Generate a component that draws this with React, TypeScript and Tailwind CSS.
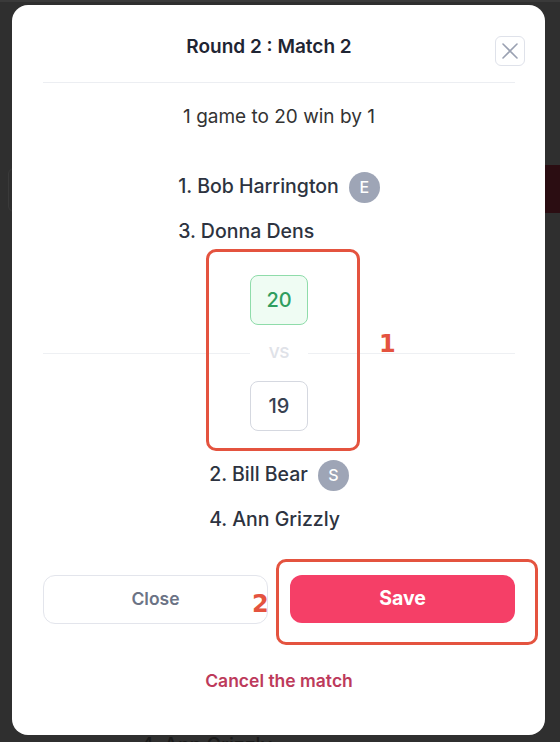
const TEAM_ONE = [
  { name: "1. Bob Harrington", badge: "E" },
  { name: "3. Donna Dens", badge: "" },
];

const TEAM_TWO = [
  { name: "2. Bill Bear", badge: "S" },
  { name: "4. Ann Grizzly", badge: "" },
];

type Player = { name: string; badge: string };

function TeamList({ players }: { players: Player[] }) {
  return (
    <div className="flex flex-col items-start gap-[15px]">
      {players.map((p) => (
        <div key={p.name} className="flex h-[30px] items-center gap-[10px]">
          <span className="text-[19.5px] font-medium text-[#2d3340]">{p.name}</span>
          {p.badge && (
            <span className="flex h-[31px] w-[31px] items-center justify-center rounded-full bg-[#9ea5b6] text-[16px] font-medium text-white">
              {p.badge}
            </span>
          )}
        </div>
      ))}
    </div>
  );
}

export default function App() {
  return (
    <div
      className="relative h-[742px] w-[560px] overflow-hidden bg-[#2f2f2f]"
      style={{ fontFamily: "Inter, 'Noto Sans', sans-serif" }}
    >
      {/* page behind the overlay */}
      <div className="absolute left-0 top-0 h-[2px] w-full bg-[#3a3a3a]" />
      <div className="absolute right-0 top-[165px] h-[48px] w-[16px] bg-[#2b0d12]" />
      <div className="absolute left-[8px] top-[168px] h-[44px] w-[8px] rounded-l-md border border-[#3a3a3a]" />
      <div className="absolute left-[141px] top-[731px] text-[19.5px] font-medium text-[#1a1a1a]">
        4. Ann Grizzly
      </div>

      <div className="relative ml-[12px] mt-[5px] flex h-[730px] w-[533px] flex-col rounded-2xl bg-white pl-[31px] pr-[30px] pt-[31px]">
        <div className="flex h-[30px] items-center">
          <h2 className="flex-1 pb-[7px] text-center text-[19px] font-semibold text-[#1f2533]">
            Round 2 : Match 2
          </h2>
          <button className="-mr-[10px] flex h-[30px] w-[30px] items-center justify-center rounded-md border border-[#dfe2ea] text-[#9aa1b2]">
            <svg width="20" height="20" viewBox="0 0 20 20" fill="none" stroke="currentColor" strokeWidth="1.6" strokeLinecap="round">
              <path d="M3 3L17 17M17 3L3 17" />
            </svg>
          </button>
        </div>

        <div className="mt-[16px] border-t border-[#eceef2]" />

        <p className="mt-[22px] text-center text-[19px] leading-[24px] text-[#333]">
          1 game to 20 win by 1
        </p>

        <div className="mt-[43px] flex justify-center">
          <TeamList players={TEAM_ONE} />
        </div>

        <div className="mt-[28px] flex flex-col items-stretch">
          <div className="flex justify-center">
            <div className="flex h-[50px] w-[58px] items-center justify-center rounded-lg border border-[#8fdcaa] bg-[#effcf3] text-[20px] font-medium text-[#2f9e5f]">
              20
            </div>
          </div>
          <div className="my-[20px] flex h-[16px] items-center">
            <div className="h-px flex-1 bg-[#eef0f3]" />
            <span className="w-[58px] text-center text-[15px] font-semibold text-[#dfe2e8]">VS</span>
            <div className="h-px flex-1 bg-[#eef0f3]" />
          </div>
          <div className="flex justify-center">
            <div className="flex h-[50px] w-[58px] items-center justify-center rounded-lg border border-[#d5d8e0] bg-white text-[20px] font-medium text-[#374151]">
              19
            </div>
          </div>
        </div>

        <div className="mt-[29px] flex justify-center">
          <TeamList players={TEAM_TWO} />
        </div>

        <div className="mt-[40px] grid grid-cols-2 gap-[22px]">
          <button className="h-[49px] rounded-xl border border-[#e3e5ec] bg-white text-[17.5px] font-semibold text-[#6b7385]">
            Close
          </button>
          <button className="h-[48px] rounded-xl bg-[#f53f67] text-[19.5px] font-bold text-white">
            Save
          </button>
        </div>

        <p className="mt-[45px] text-center text-[17.5px] font-semibold leading-[24px] text-[#bd3a5b]">
          Cancel the match
        </p>
      </div>

      {/* annotations */}
      <div className="absolute left-[206px] top-[249px] h-[202px] w-[154px] rounded-[10px] border-[3px] border-[#e4533f]" />
      <div
        className="absolute left-[379px] top-[326px] text-[24px] font-bold text-[#e4533f]"
        style={{ fontFamily: "'DejaVu Sans', sans-serif" }}
      >
        1
      </div>
      <div className="absolute left-[276px] top-[559px] h-[86px] w-[262px] rounded-[10px] border-[3px] border-[#e4533f]" />
      <div
        className="absolute left-[252px] top-[586px] text-[24px] font-bold text-[#e4533f]"
        style={{ fontFamily: "'DejaVu Sans', sans-serif" }}
      >
        2
      </div>
    </div>
  );
}
